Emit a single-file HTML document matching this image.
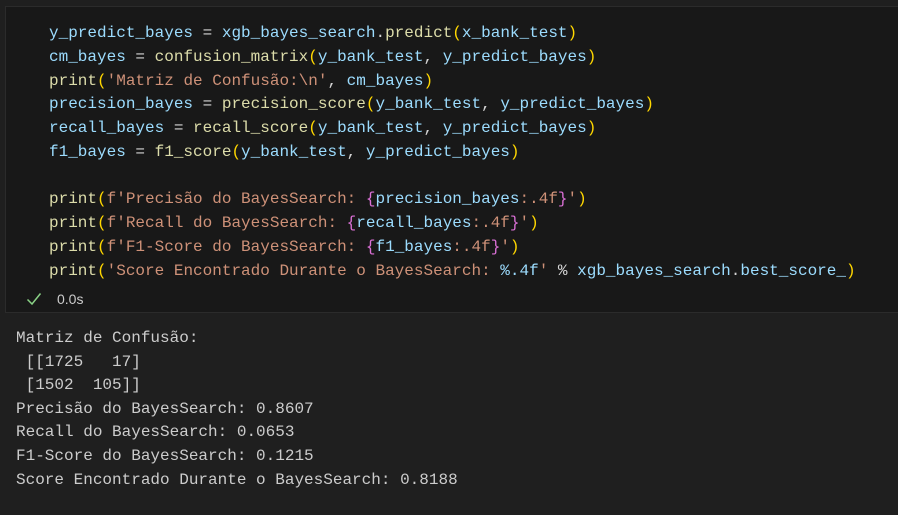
<!DOCTYPE html>
<html><head><meta charset="utf-8"><style>
body{margin:0;width:898px;height:515px;background:#1f1f1f;overflow:hidden;font-family:"Liberation Mono",monospace;font-size:16px;}
.cell{position:absolute;left:5px;top:6px;width:900px;height:307px;background:#181818;border:1px solid #2b2b2b;box-sizing:border-box;}
.code{position:absolute;left:49px;top:22px;line-height:23.75px;white-space:pre;color:#d4d4d4;}
.v{color:#9cdcfe}.f{color:#dcdcaa}.s{color:#ce9178}.p{color:#ffd700}.b{color:#da70d6}
.status{position:absolute;color:#cccccc;font-family:"Liberation Sans",sans-serif;font-size:14px;}
.out{position:absolute;left:16px;top:327px;line-height:23.6px;white-space:pre;color:#cccccc;}
</style></head><body>
<div class="cell"></div>
<div class="code"><span class="v">y_predict_bayes</span> = <span class="v">xgb_bayes_search</span>.<span class="f">predict</span><span class="p">(</span><span class="v">x_bank_test</span><span class="p">)</span>
<span class="v">cm_bayes</span> = <span class="f">confusion_matrix</span><span class="p">(</span><span class="v">y_bank_test</span>, <span class="v">y_predict_bayes</span><span class="p">)</span>
<span class="f">print</span><span class="p">(</span><span class="s">'Matriz de Confusão:\n'</span>, <span class="v">cm_bayes</span><span class="p">)</span>
<span class="v">precision_bayes</span> = <span class="f">precision_score</span><span class="p">(</span><span class="v">y_bank_test</span>, <span class="v">y_predict_bayes</span><span class="p">)</span>
<span class="v">recall_bayes</span> = <span class="f">recall_score</span><span class="p">(</span><span class="v">y_bank_test</span>, <span class="v">y_predict_bayes</span><span class="p">)</span>
<span class="v">f1_bayes</span> = <span class="f">f1_score</span><span class="p">(</span><span class="v">y_bank_test</span>, <span class="v">y_predict_bayes</span><span class="p">)</span>

<span class="f">print</span><span class="p">(</span><span class="s">f'Precisão do BayesSearch: </span><span class="b">{</span><span class="v">precision_bayes</span><span class="s">:.4f</span><span class="b">}</span><span class="s">'</span><span class="p">)</span>
<span class="f">print</span><span class="p">(</span><span class="s">f'Recall do BayesSearch: </span><span class="b">{</span><span class="v">recall_bayes</span><span class="s">:.4f</span><span class="b">}</span><span class="s">'</span><span class="p">)</span>
<span class="f">print</span><span class="p">(</span><span class="s">f'F1-Score do BayesSearch: </span><span class="b">{</span><span class="v">f1_bayes</span><span class="s">:.4f</span><span class="b">}</span><span class="s">'</span><span class="p">)</span>
<span class="f">print</span><span class="p">(</span><span class="s">'Score Encontrado Durante o BayesSearch: </span><span class="v">%.4f</span><span class="s">'</span> % <span class="v">xgb_bayes_search</span>.<span class="v">best_score_</span><span class="p">)</span></div>
<svg style="position:absolute;left:26px;top:292px" width="16" height="14" viewBox="0 0 16 14"><path d="M1.5 7.5 L6 12 L14.5 1.5" fill="none" stroke="#89d185" stroke-width="1.5"/></svg>
<div class="status" style="left:57px;top:291px">0.0s</div>
<div class="out">Matriz de Confusão:
 [[1725   17]
 [1502  105]]
Precisão do BayesSearch: 0.8607
Recall do BayesSearch: 0.0653
F1-Score do BayesSearch: 0.1215
Score Encontrado Durante o BayesSearch: 0.8188</div>
</body></html>
